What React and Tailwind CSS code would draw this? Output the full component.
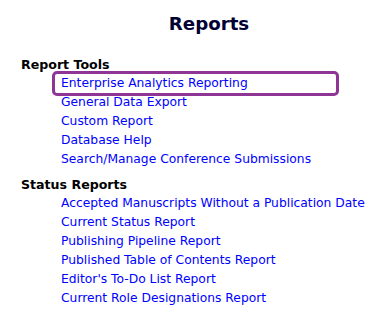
import React from "react";

const reportTools = [
  "Enterprise Analytics Reporting",
  "General Data Export",
  "Custom Report",
  "Database Help",
  "Search/Manage Conference Submissions",
];

const statusReports = [
  "Accepted Manuscripts Without a Publication Date",
  "Current Status Report",
  "Publishing Pipeline Report",
  "Published Table of Contents Report",
  "Editor's To-Do List Report",
  "Current Role Designations Report",
];

const LinkRow = ({ label, highlight }) => (
  <li className={highlight ? "-my-[3px] -ml-[9px] w-[287px] rounded-[5px] border-[3px] border-[#8e3596] pl-[6px]" : ""}>
    <a href="#" className="block h-[19px] leading-[19px] text-[#0000ff]">
      {label}
    </a>
  </li>
);

export default function App() {
  return (
    <div
      className="min-h-[317px] bg-white text-[12.3px] text-black"
      style={{ fontFamily: '"DejaVu Sans", Verdana, sans-serif' }}
    >
      <h1 className="pt-[12px] pl-[34px] text-center text-[18.2px] font-bold leading-[24px] text-[#000033]">
        Reports
      </h1>

      <div className="mt-[19px] pl-[21px]">
        <h2 className="text-[12.6px] font-bold leading-[19px]">Report Tools</h2>
        <ul className="pl-[40px]">
          {reportTools.map((t, i) => (
            <LinkRow key={t} label={t} highlight={i === 0} />
          ))}
        </ul>

        <h2 className="mt-[6px] text-[12.6px] font-bold leading-[19px]">Status Reports</h2>
        <ul className="pl-[40px]">
          {statusReports.map((t) => (
            <LinkRow key={t} label={t} />
          ))}
        </ul>
      </div>
    </div>
  );
}
